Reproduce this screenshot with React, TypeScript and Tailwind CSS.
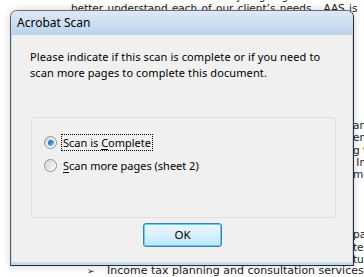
import React from "react"

const docFont = { fontFamily: '"DejaVu Sans", Verdana, sans-serif' }
const uiFont = { fontFamily: '"Noto Sans", "Open Sans", sans-serif' }

function Radio({ checked }: { checked?: boolean }) {
  return (
    <span className="relative flex h-[13px] w-[13px] shrink-0 items-center justify-center rounded-full border border-[#8e8f8f] bg-gradient-to-br from-[#cfcfcf] via-[#f4f4f4] to-[#ffffff]">
      <span className="flex h-[9px] w-[9px] items-center justify-center rounded-full bg-gradient-to-br from-[#d8d8d8] to-[#f7f7f7]">
        {checked && (
          <span className="h-[6px] w-[6px] rounded-full bg-gradient-to-br from-[#1e5aa0] via-[#3c8ccc] to-[#9cd6f6]" />
        )}
      </span>
    </span>
  )
}

export default function App() {
  return (
    <div className="relative h-[277px] w-[364px] overflow-hidden bg-white text-black">
      {/* document behind the dialog */}
      <div className="absolute left-[71px] top-[-10px] whitespace-nowrap text-[10.5px] leading-[12px] text-[#222]" style={docFont}>
        <div className="pl-[140px]">a way of going</div>
        <div className="[word-spacing:1px]">better understand each of our client’s needs.&nbsp; AAS is</div>
      </div>
      <div className="absolute left-[353px] top-[119px] text-[10.5px] leading-[12.3px] text-[#222]" style={docFont}>
        <div>an</div>
        <div>en</div>
        <div>g t</div>
        <div>&nbsp;In</div>
        <div>me</div>
      </div>
      <div className="absolute left-[353px] top-[228px] text-[10.5px] leading-[12.5px] text-[#222]" style={docFont}>
        <div>pa</div>
        <div>te:</div>
        <div>tu</div>
      </div>
      <div className="absolute left-[87px] top-[265px] flex items-center whitespace-nowrap text-[11px] leading-[12px] text-[#222]" style={docFont}>
        <span className="w-[20px] text-[9px]">➢</span>
        <span>Income tax planning and consultation services</span>
      </div>

      {/* dialog */}
      <div
        className="absolute left-[10px] top-[10px] flex h-[256px] w-[344px] flex-col rounded-t-[7px] border border-[#2b2b2b] border-l-[#5a5a5a] border-t-[#6d6d6d] bg-[#c4d9ee] shadow-[0_0_8px_rgba(0,0,0,0.18)]"
        style={uiFont}
      >
        <div className="flex h-[24px] items-center rounded-t-[6px] bg-gradient-to-b from-[#dde9f6] to-[#bcd3ea] pl-[6px] text-[12px] text-black">
          Acrobat Scan
        </div>
        <div className="mx-[1px] mb-[1px] flex flex-1 flex-col border-b-[2px] border-[#bfe0f3] bg-[#f0f0f0] px-[18px] pt-[14px]">
          <p className="text-[11px] leading-[16px] tracking-[0.1px]">
            Please indicate if this scan is complete or if you need to
            <br />
            scan more pages to complete this document.
          </p>
          <div className="ml-[1px] mt-[36px] flex h-[101px] w-[305px] flex-col rounded-[3px] border border-[#d5dfe5] px-[12px] pt-[16px] text-[11px]">
            <div className="flex items-center gap-[4px]">
              <Radio checked />
              <span className="border border-dotted border-black px-[1px] leading-[15px]">
                Scan is <span className="underline underline-offset-2">C</span>omplete
              </span>
            </div>
            <div className="mt-[7px] flex items-center gap-[4px]">
              <Radio />
              <span className="px-[2px] leading-[15px]">
                <span className="underline underline-offset-2">S</span>can more pages (sheet 2)
              </span>
            </div>
          </div>
          <div className="mt-[5px] flex justify-center">
            <button className="ml-[1px] flex h-[24px] w-[79px] items-center justify-center rounded-[3px] border border-[#3c7fb1] bg-gradient-to-b from-[#eaf6fd] via-[#d9f0fc] to-[#bee6fd] text-[11.5px] shadow-[inset_0_0_0_1px_#58d1f7]">
              OK
            </button>
          </div>
        </div>
      </div>
    </div>
  )
}
